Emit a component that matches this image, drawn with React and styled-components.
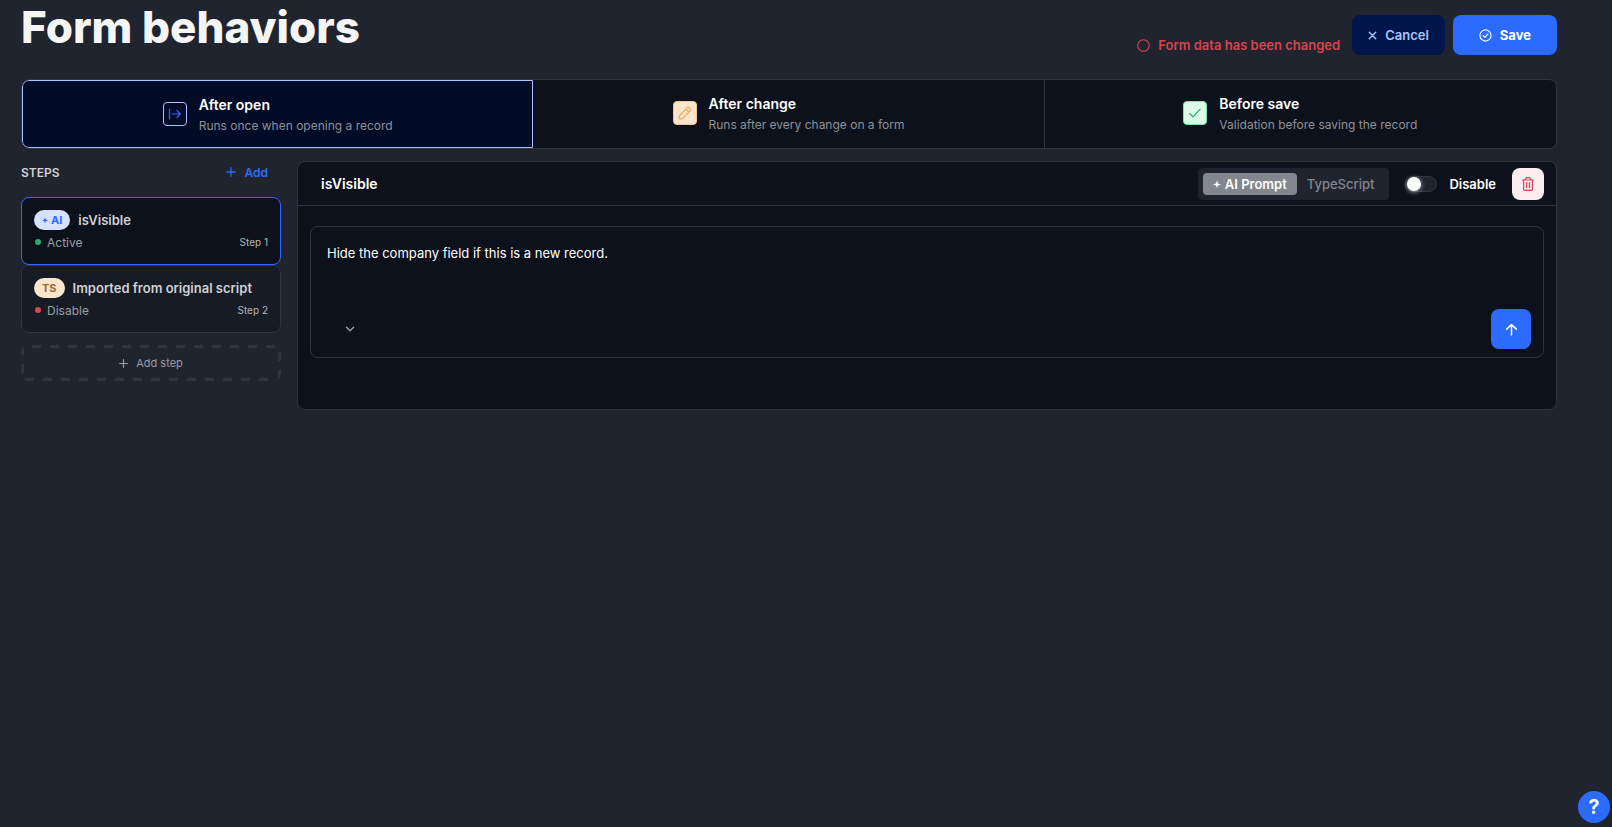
import React, { useState } from 'react';
import styled, { createGlobalStyle } from 'styled-components';

const GlobalStyle = createGlobalStyle`
  * {
    box-sizing: border-box;
  }

  body {
    margin: 0;
    background: #20242e;
    color: #ffffff;
    font-family: Inter, 'Liberation Sans', sans-serif;
    font-size: 13px;
  }

  button, select, textarea {
    font-family: inherit;
  }

  button {
    cursor: pointer;
  }
`;

// Page
const Page = styled.main`
  padding: 0 55px 24px 21px;
`;

const Header = styled.header`
  display: flex;
  justify-content: space-between;
  align-items: flex-start;
  margin-bottom: 24px;
`;

const Title = styled.h1`
  margin: 0;
  font-size: 44px;
  line-height: 54px;
  font-weight: 800;
  color: #f5f5f5;
`;

const HeaderActions = styled.div`
  display: flex;
  align-items: flex-end;
  gap: 8px;
  padding-top: 15px;
`;

const ChangedNote = styled.p`
  display: flex;
  align-items: center;
  gap: 8px;
  margin: 0 4px 0 0;
  line-height: 20px;
  font-weight: 600;
  color: #d64550;
`;

const Button = styled.button`
  display: flex;
  align-items: center;
  justify-content: center;
  gap: 8px;
  height: 40px;
  padding: 0 ${(p) => (p.$primary ? 26 : 16)}px;
  border: 0;
  border-radius: 8px;
  background: ${(p) => (p.$primary ? '#2c6bff' : '#00154a')};
  color: ${(p) => (p.$primary ? '#ffffff' : '#abc4ff')};
  font-size: 13px;
  font-weight: ${(p) => (p.$primary ? 700 : 600)};
`;

// Event tabs
const Tabs = styled.div`
  display: grid;
  grid-template-columns: repeat(3, 1fr);
  margin-bottom: 12px;
  border: 1px solid #30343f;
  border-radius: 8px;
  background: #0c111b;
  overflow: hidden;
`;

const Tab = styled.button`
  display: flex;
  align-items: flex-start;
  justify-content: center;
  gap: 12px;
  height: 68px;
  padding: 13px 16px 12px;
  border: ${(p) => (p.$active ? '1px solid #abc4ff' : '0')};
  border-right: ${(p) => (p.$active ? '1px solid #abc4ff' : '1px solid #30343f')};
  border-radius: ${(p) => (p.$active && p.$first ? '7px 0 0 7px' : '0')};
  background: ${(p) => (p.$active ? '#000b26' : 'transparent')};
  color: #ffffff;
  text-align: left;

  &:last-child {
    border-right-width: ${(p) => (p.$active ? 1 : 0)}px;
  }
`;

const tones = {
  blue: { bg: 'transparent', border: '#abc4ff', color: '#2c6bff' },
  orange: { bg: '#fbe6cd', border: '#f5c78f', color: '#f0a85c' },
  green: { bg: '#dcfce8', border: '#7fe0ab', color: '#22b070' },
};

const TabIcon = styled.span`
  display: flex;
  align-items: center;
  justify-content: center;
  width: 24px;
  height: 24px;
  margin-top: 8px;
  border: 1px solid ${(p) => tones[p.$tone].border};
  border-radius: 4px;
  background: ${(p) => tones[p.$tone].bg};
  color: ${(p) => tones[p.$tone].color};
`;

const TabText = styled.span`
  display: flex;
  flex-direction: column;
  gap: 2px;
`;

const TabTitle = styled.span`
  font-size: 14px;
  line-height: 21px;
  font-weight: 600;
`;

const TabHint = styled.span`
  font-size: 12px;
  line-height: 18px;
  color: #8f929a;
`;

// Body
const Body = styled.div`
  display: grid;
  grid-template-columns: 260px 1fr;
  gap: 16px;
  align-items: start;
`;

const StepsHead = styled.div`
  display: flex;
  align-items: center;
  justify-content: space-between;
  height: 22px;
  margin-bottom: 14px;
`;

const StepsTitle = styled.h2`
  margin: 0;
  font-size: 12px;
  font-weight: 600;
  color: #d0d2d6;
`;

const AddLink = styled.button`
  display: flex;
  align-items: center;
  gap: 8px;
  padding: 0 13px;
  border: 0;
  background: none;
  color: #2c6bff;
  font-size: 12px;
  font-weight: 600;
`;

const StepCard = styled.button`
  display: flex;
  flex-direction: column;
  gap: 4px;
  width: 100%;
  padding: 12px;
  border: 1px solid ${(p) => (p.$active ? '#2c6bff' : '#30343f')};
  border-radius: 8px;
  background: ${(p) => (p.$active ? '#0c111b' : '#171b24')};
  text-align: left;
`;

const StepTop = styled.span`
  display: flex;
  align-items: center;
  gap: 8px;
`;

const Badge = styled.span`
  display: flex;
  align-items: center;
  gap: 3px;
  height: 20px;
  padding: 0 8px;
  border-radius: 10px;
  background: ${(p) => (p.$kind === 'AI' ? '#d5e1ff' : '#fbe6cd')};
  color: ${(p) => (p.$kind === 'AI' ? '#2c6bff' : '#9c6a38')};
  font-size: 11px;
  font-weight: 700;
`;

const StepName = styled.span`
  font-size: 13px;
  font-weight: 600;
  color: #d0d2d6;
`;

const StepMeta = styled.span`
  display: flex;
  align-items: center;
  gap: 6px;
  width: 100%;
  height: 16px;
  margin-bottom: 2px;
  padding-left: 1px;
  font-size: 12px;
  color: #9a9da4;
`;

const Dot = styled.span`
  width: 6px;
  height: 6px;
  border-radius: 50%;
  background: ${(p) => (p.$on ? '#22b070' : '#d64550')};
`;

const StepNumber = styled.span`
  margin-left: auto;
  font-size: 10px;
  color: #b5b7bc;
`;

// Long 9px dashes, drawn edge by edge
const AddStep = styled.button`
  --across: linear-gradient(90deg, #30343f 50%, transparent 50%);
  --down: linear-gradient(180deg, #30343f 50%, transparent 50%);
  display: flex;
  align-items: center;
  justify-content: center;
  gap: 8px;
  width: 100%;
  height: 36px;
  margin-top: 12px;
  border: 0;
  border-radius: 8px;
  background:
    var(--across) 11px 0 / 18px 3px repeat-x,
    var(--across) 4px 100% / 18px 3px repeat-x,
    var(--down) 0 1px / 3px 18px repeat-y,
    var(--down) 100% 7px / 3px 18px repeat-y;
  color: #9a9da4;
  font-size: 11px;
`;

// Step editor
const Panel = styled.section`
  padding-bottom: 51px;
  border: 1px solid #30343f;
  border-radius: 8px;
  background: #0c111b;
`;

const PanelHead = styled.div`
  display: flex;
  align-items: center;
  height: 44px;
  padding: 0 12px 0 23px;
  border-bottom: 1px solid #30343f;
`;

const PanelTitle = styled.h2`
  flex: 1;
  margin: 0;
  font-size: 14px;
  font-weight: 600;
`;

const Segmented = styled.div`
  display: flex;
  padding: 5px;
  border-radius: 4px;
  background: #20242e;
`;

const Segment = styled.button`
  display: flex;
  align-items: center;
  gap: 4px;
  height: 22px;
  padding: 0 10px;
  border: 0;
  border-radius: 4px;
  background: ${(p) => (p.$active ? '#83868d' : 'transparent')};
  color: ${(p) => (p.$active ? '#ffffff' : '#83868d')};
  font-size: 13px;
  font-weight: ${(p) => (p.$active ? 600 : 500)};
`;

const SwitchLabel = styled.label`
  display: flex;
  align-items: center;
  gap: 12px;
  margin: 0 16px;
  font-weight: 600;
  cursor: pointer;
`;

const Switch = styled.input`
  appearance: none;
  display: flex;
  align-items: center;
  width: 32px;
  height: 16px;
  margin: 0;
  border: 1px solid #30343f;
  border-radius: 8px;
  background: #20242e;
  cursor: pointer;

  &::before {
    content: '';
    width: 14px;
    height: 14px;
    margin-left: 1px;
    border-radius: 50%;
    background: #ffffff;
    box-shadow: 0 1px 5px rgba(255, 255, 255, 0.6);
  }

  &:checked::before {
    margin-left: 15px;
  }
`;

const DeleteButton = styled.button`
  display: flex;
  align-items: center;
  justify-content: center;
  width: 32px;
  height: 32px;
  padding: 0;
  border: 0;
  border-radius: 8px;
  background: #fceeee;
  color: #d64550;
`;

const PromptBox = styled.div`
  margin: 20px 12px 0;
  border: 1px solid #30343f;
  border-radius: 8px;
`;

const PromptInput = styled.textarea`
  display: block;
  width: 100%;
  height: 82px;
  padding: 16px;
  border: 0;
  outline: 0;
  resize: none;
  background: transparent;
  color: #ffffff;
  font-size: 13px;
  line-height: 20px;
`;

const PromptFoot = styled.div`
  display: flex;
  align-items: center;
  justify-content: space-between;
  padding: 0 12px 8px;
`;

const ModelPicker = styled.div`
  display: grid;
  align-items: center;
  color: #a3a6ad;

  > * {
    grid-area: 1 / 1;
  }

  svg {
    justify-self: end;
    margin-right: 8px;
    pointer-events: none;
  }
`;

const ModelSelect = styled.select`
  appearance: none;
  width: 40px;
  height: 32px;
  border: 0;
  background: transparent;
  color: inherit;
`;

const SendButton = styled.button`
  display: flex;
  align-items: center;
  justify-content: center;
  width: 40px;
  height: 40px;
  padding: 0;
  border: 0;
  border-radius: 8px;
  background: #2c6bff;
  color: #ffffff;
`;

const HelpButton = styled.button`
  position: fixed;
  right: 2px;
  bottom: 4px;
  width: 32px;
  height: 32px;
  padding: 0;
  border: 0;
  border-radius: 50%;
  background: #2c6bff;
  color: #ffffff;
  font-size: 20px;
  font-weight: 700;
`;

// Stroke icons on a 14px grid
const paths = {
  circle: <circle cx="7" cy="7" r="6.2" />,
  times: <path d="M2 2l10 10M12 2L2 12" />,
  checkCircle: (
    <>
      <circle cx="7" cy="7" r="6" />
      <path d="M4.4 7.2l1.9 1.8 3.4-3.8" />
    </>
  ),
  open: <path d="M1.5 2.2v9.6M4 7h8.4M8.8 3.4L12.4 7l-3.6 3.6" />,
  pencil: (
    <path d="M1.2 12.8V9.8l7.9-7.9a1.6 1.6 0 0 1 2.3 0l.7.7a1.6 1.6 0 0 1 0 2.3l-7.9 7.9H1.2zM8 3l3 3" />
  ),
  check: <path d="M1.8 7.7L5 10.8l7.2-7.6" />,
  plus: <path d="M7 1v12M1 7h12" />,
  trash: (
    <path d="M1.4 3h11.2M2.6 3v9.2a1.2 1.2 0 0 0 1.2 1.2h6.4a1.2 1.2 0 0 0 1.2-1.2V3M4.6 3V1.6a1 1 0 0 1 1-1h2.8a1 1 0 0 1 1 1V3M5.5 5.6v5M8.5 5.6v5" />
  ),
  arrowUp: <path d="M7 13V1.8M1.8 6.6L7 1.6l5.2 5" />,
  chevronDown: <path d="M2 4.5l5 5 5-5" />,
};

const Icon = ({ name, size = 14, width = 1.2 }) => (
  <svg
    width={size}
    height={size}
    viewBox="0 0 14 14"
    fill="none"
    stroke="currentColor"
    strokeWidth={width}
    strokeLinecap="round"
    strokeLinejoin="round"
    aria-hidden="true"
  >
    {paths[name]}
  </svg>
);

const Spark = ({ size = 8 }) => (
  <svg width={size} height={size} viewBox="0 0 8 8" fill="currentColor" aria-hidden="true">
    <path d="M4 .5l1.1 2.9 2.9 1.1-2.9 1.1L4 8 2.9 5.6 0 4.5l2.9-1.1z" />
  </svg>
);

const events = [
  { id: 'open', title: 'After open', hint: 'Runs once when opening a record', icon: 'open', tone: 'blue' },
  { id: 'change', title: 'After change', hint: 'Runs after every change on a form', icon: 'pencil', tone: 'orange' },
  { id: 'save', title: 'Before save', hint: 'Validation before saving the record', icon: 'check', tone: 'green' },
];

const steps = [
  { id: 1, kind: 'AI', name: 'isVisible', active: true },
  { id: 2, kind: 'TS', name: 'Imported from original script', active: false },
];

const App = () => {
  const [event, setEvent] = useState('open');
  const [stepId, setStepId] = useState(1);
  const [mode, setMode] = useState('ai');
  const [disabled, setDisabled] = useState(false);
  const [prompt, setPrompt] = useState('Hide the company field if this is a new record.');

  const current = steps.find((step) => step.id === stepId);

  return (
    <>
      <GlobalStyle />
      <Page>
        <Header>
          <Title>Form behaviors</Title>
          <HeaderActions>
            <ChangedNote>
              <Icon name="circle" size={13} />
              Form data has been changed
            </ChangedNote>
            <Button type="button">
              <Icon name="times" size={9} width={2.2} />
              Cancel
            </Button>
            <Button type="button" $primary>
              <Icon name="checkCircle" size={13} />
              Save
            </Button>
          </HeaderActions>
        </Header>

        <Tabs role="tablist">
          {events.map((item, index) => (
            <Tab
              key={item.id}
              type="button"
              role="tab"
              aria-selected={event === item.id}
              $active={event === item.id}
              $first={index === 0}
              onClick={() => setEvent(item.id)}
            >
              <TabIcon $tone={item.tone}>
                <Icon name={item.icon} size={14} />
              </TabIcon>
              <TabText>
                <TabTitle>{item.title}</TabTitle>
                <TabHint>{item.hint}</TabHint>
              </TabText>
            </Tab>
          ))}
        </Tabs>

        <Body>
          <aside>
            <StepsHead>
              <StepsTitle>STEPS</StepsTitle>
              <AddLink type="button">
                <Icon name="plus" size={10} width={1.8} />
                Add
              </AddLink>
            </StepsHead>
            {steps.map((step) => (
              <StepCard
                key={step.id}
                type="button"
                $active={step.id === stepId}
                onClick={() => setStepId(step.id)}
              >
                <StepTop>
                  <Badge $kind={step.kind}>
                    {step.kind === 'AI' && <Spark size={6} />}
                    {step.kind}
                  </Badge>
                  <StepName>{step.name}</StepName>
                </StepTop>
                <StepMeta>
                  <Dot $on={step.active} />
                  {step.active ? 'Active' : 'Disable'}
                  <StepNumber>Step {step.id}</StepNumber>
                </StepMeta>
              </StepCard>
            ))}
            <AddStep type="button">
              <Icon name="plus" size={9} width={1.8} />
              Add step
            </AddStep>
          </aside>

          <Panel>
            <PanelHead>
              <PanelTitle>{current.name}</PanelTitle>
              <Segmented>
                <Segment type="button" $active={mode === 'ai'} onClick={() => setMode('ai')}>
                  <Spark />
                  AI Prompt
                </Segment>
                <Segment type="button" $active={mode === 'ts'} onClick={() => setMode('ts')}>
                  TypeScript
                </Segment>
              </Segmented>
              <SwitchLabel>
                <Switch
                  type="checkbox"
                  role="switch"
                  checked={disabled}
                  onChange={(e) => setDisabled(e.target.checked)}
                />
                Disable
              </SwitchLabel>
              <DeleteButton type="button" aria-label="Delete step">
                <Icon name="trash" size={14} />
              </DeleteButton>
            </PanelHead>

            <PromptBox>
              <PromptInput
                aria-label="Prompt"
                value={prompt}
                onChange={(e) => setPrompt(e.target.value)}
              />
              <PromptFoot>
                <ModelPicker>
                  <ModelSelect aria-label="Model" defaultValue="">
                    <option value="" />
                  </ModelSelect>
                  <Icon name="chevronDown" size={10} width={1.8} />
                </ModelPicker>
                <SendButton type="button" aria-label="Send prompt">
                  <Icon name="arrowUp" size={13} width={1.6} />
                </SendButton>
              </PromptFoot>
            </PromptBox>
          </Panel>
        </Body>
      </Page>
      <HelpButton type="button" aria-label="Help">?</HelpButton>
    </>
  );
};

export default App;
